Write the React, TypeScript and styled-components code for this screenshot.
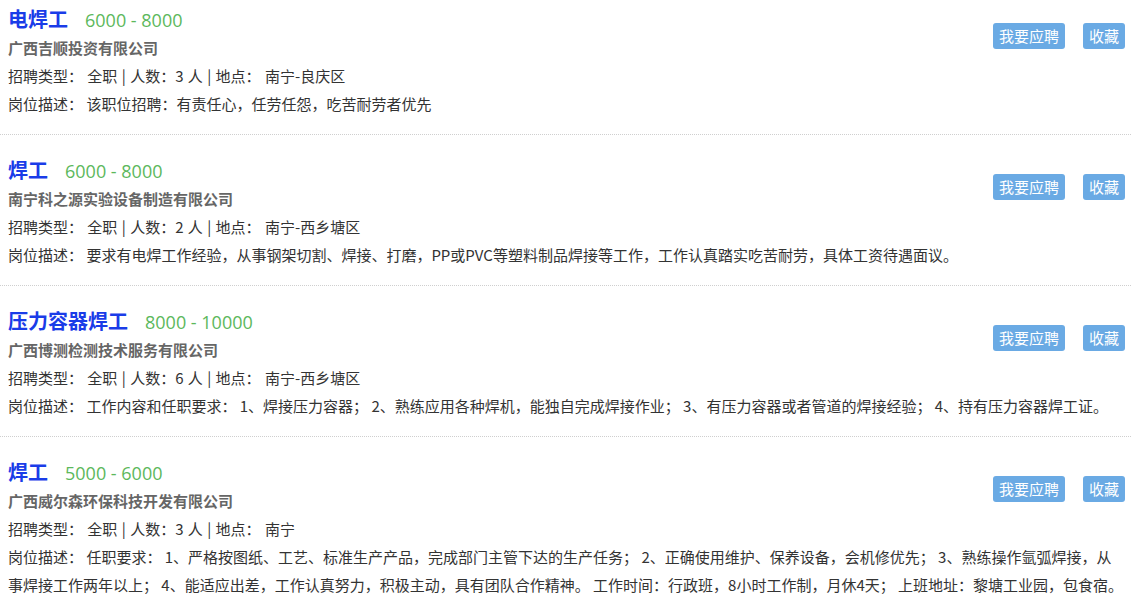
import React from 'react';
import styled, {createGlobalStyle} from 'styled-components';

type Job = {
    title: string
    salary: string
    company: string
    count: number
    place: string
    desc: string
}

const jobs: Job[] = [
    {
        title: '电焊工',
        salary: '6000 - 8000',
        company: '广西吉顺投资有限公司',
        count: 3,
        place: '南宁-良庆区',
        desc: '该职位招聘：有责任心，任劳任怨，吃苦耐劳者优先',
    },
    {
        title: '焊工',
        salary: '6000 - 8000',
        company: '南宁科之源实验设备制造有限公司',
        count: 2,
        place: '南宁-西乡塘区',
        desc: '要求有电焊工作经验，从事钢架切割、焊接、打磨，PP或PVC等塑料制品焊接等工作，工作认真踏实吃苦耐劳，具体工资待遇面议。',
    },
    {
        title: '压力容器焊工',
        salary: '8000 - 10000',
        company: '广西博测检测技术服务有限公司',
        count: 6,
        place: '南宁-西乡塘区',
        desc: '工作内容和任职要求： 1、焊接压力容器； 2、熟练应用各种焊机，能独自完成焊接作业； 3、有压力容器或者管道的焊接经验； 4、持有压力容器焊工证。',
    },
    {
        title: '焊工',
        salary: '5000 - 6000',
        company: '广西威尔森环保科技开发有限公司',
        count: 3,
        place: '南宁',
        desc: '任职要求： 1、严格按图纸、工艺、标准生产产品，完成部门主管下达的生产任务； 2、正确使用维护、保养设备，会机修优先； 3、熟练操作氩弧焊接，从事焊接工作两年以上； 4、能适应出差，工作认真努力，积极主动，具有团队合作精神。 工作时间：行政班，8小时工作制，月休4天； 上班地址：黎塘工业园，包食宿。',
    },
]

const GlobalStyle = createGlobalStyle`
  body {
    margin: 0;
    background: #fff;
    font-family: "Noto Sans CJK SC", sans-serif;
    color: #333;
  }
`

export default function App() {
    return (
        <>
            <GlobalStyle/>
            <JobList>
                {jobs.map((job, i) => (
                    <JobItem key={i}>
                        <Actions>
                            <ActionButton>我要应聘</ActionButton>
                            <ActionButton>收藏</ActionButton>
                        </Actions>
                        <TitleRow>
                            <JobTitle>{job.title}</JobTitle>
                            <Salary>{job.salary}</Salary>
                        </TitleRow>
                        <Company>{job.company}</Company>
                        <InfoLine $spaced>
                            招聘类型： 全职 | 人数：{job.count} 人 | 地点： {job.place}
                        </InfoLine>
                        <InfoLine>岗位描述： {job.desc}</InfoLine>
                    </JobItem>
                ))}
            </JobList>
        </>
    );
}

const JobList = styled.div`
  width: 100%;
`
const JobItem = styled.div`
  padding: 20px 6px 16px 8px;
  border-bottom: 1px dotted #cfcfcf;
  &:first-child {
    padding-top: 4px;
  }
  &::after {
    content: '';
    display: block;
    clear: both;
  }
`
const Actions = styled.div`
  float: right;
  display: flex;
  gap: 18px;
  margin-top: 19px;
`
const ActionButton = styled.button`
  height: 26px;
  padding: 0 6px;
  border: none;
  border-radius: 3px;
  background: #6aaae4;
  color: #fff;
  font-family: "Noto Sans CJK SC", sans-serif;
  font-size: 15px;
  line-height: 26px;
  cursor: pointer;
`
const TitleRow = styled.div`
  display: flex;
  align-items: baseline;
  gap: 17px;
  height: 30px;
  line-height: 30px;
`
const JobTitle = styled.span`
  color: #1a3ce8;
  font-size: 20px;
  font-weight: bold;
`
const Salary = styled.span`
  color: #5cb85c;
  font-family: "Open Sans", "Noto Sans CJK SC", sans-serif;
  font-size: 18px;
`
const Company = styled.div`
  color: #666;
  font-size: 15px;
  font-weight: bold;
  line-height: 28px;
`
const InfoLine = styled.div<{ $spaced?: boolean }>`
  color: #333;
  font-size: 15px;
  line-height: 28px;
  word-spacing: ${p => (p.$spaced ? '1px' : 'normal')};
`
